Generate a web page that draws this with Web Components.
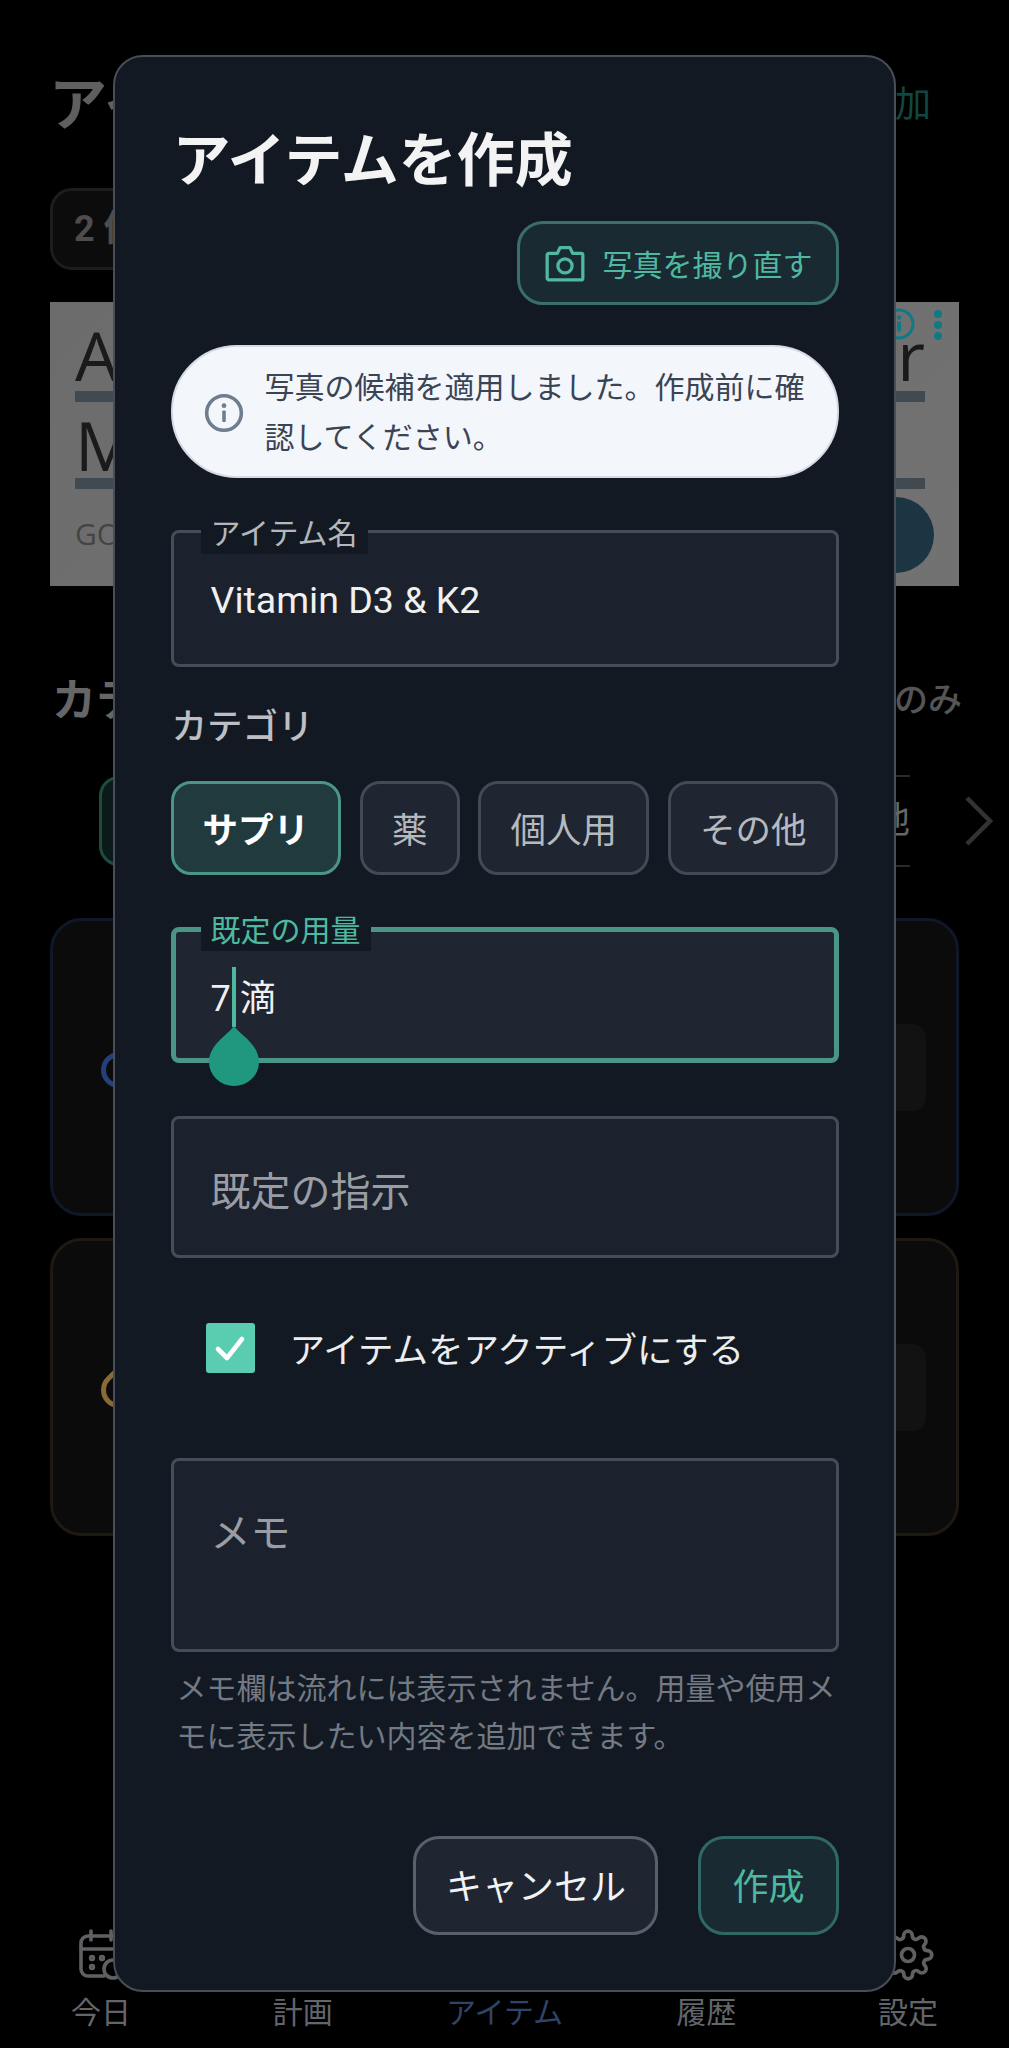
<!DOCTYPE html>
<html lang="ja">
<head>
<meta charset="utf-8">
<title>アイテムを作成</title>
<style>
html,body{margin:0;padding:0;background:#000;}
body{font-family:Roboto,"Noto Sans CJK JP",sans-serif;}
</style>
</head>
<body>
<app-shell>
  <bg-screen></bg-screen>
  <create-dialog></create-dialog>
</app-shell>
<script>
function def(name, css, html){
  customElements.define(name, class extends HTMLElement{
    connectedCallback(){
      if(this.shadowRoot) return;
      const r=this.attachShadow({mode:'open'});
      const h=typeof html==='function'?html(this):html;
      r.innerHTML='<style>'+css+'</style>'+h;
    }
  });
}
def('app-shell',`:host{display:block;position:relative;width:1009px;height:2048px;overflow:hidden;background:#000;}`,`<slot></slot>`);

def('ad-banner',`
:host{display:block;position:relative;height:284px;margin:0 50px 0 50px;background:linear-gradient(135deg,#6c6c6c,#727272);color:#1a1a1a;font-family:"Open Sans",sans-serif;overflow:hidden;}
.pad{padding:17px 34px 0 25px;}
.line{display:flex;justify-content:space-between;font-size:68px;line-height:72px;height:72px;}
.line.m{margin-top:9px;height:67px;line-height:67px;}
.bar{height:11px;background:#414a50;}
.go{font-size:30px;line-height:40px;color:#444;margin-top:25px;}
.cta{position:absolute;left:808px;top:195px;width:76px;height:76px;border-radius:50%;background:#1c3542;}
.i{position:absolute;left:833px;top:6px;width:32px;height:32px;}
.d{position:absolute;left:884px;top:8px;width:8px;height:30px;}
`,`<div class="pad">
<div class="line"><span>A</span><span>r</span></div><div class="bar"></div>
<div class="line m"><span>M</span></div><div class="bar"></div>
<div class="go">GO</div></div>
<div class="cta"></div>
<svg class="i" viewBox="0 0 32 32" fill="none"><circle cx="16" cy="16" r="14" stroke="#0f7a86" stroke-width="3"/><circle cx="16" cy="9.5" r="2.2" fill="#0f7a86"/><rect x="14" y="13.5" width="4" height="10" fill="#0f7a86"/></svg>
<svg class="d" viewBox="0 0 8 30"><circle cx="4" cy="4" r="4" fill="#0f7a86"/><circle cx="4" cy="15" r="4" fill="#0f7a86"/><circle cx="4" cy="26" r="4" fill="#0f7a86"/></svg>`);

def('bg-card',`
:host{display:flex;align-items:center;box-sizing:border-box;height:298px;margin:0 50px;border:3px solid var(--b);border-radius:32px;background:#0b0b0b;padding:0 30px 0 48px;justify-content:space-between;}
.ic{width:36px;height:36px;border-radius:50%;border:5px solid var(--ic);box-sizing:border-box;margin-top:6px;}
:host(.b) .ic{border-radius:0 50% 50% 50%;transform:rotate(45deg);}
.bx{width:60px;height:87px;border-radius:14px;background:#121212;}
`,`<div class="ic"></div><div class="bx"></div>`);

def('bg-screen',`
:host{display:flex;flex-direction:column;height:2048px;box-sizing:border-box;font-family:Roboto,"Noto Sans CJK JP",sans-serif;}
.hd{display:flex;justify-content:space-between;align-items:center;padding:70px 78px 0 49px;height:70px;}
.hd b{font-size:58px;color:#5f5f5f;line-height:70px;}
.hd span{font-size:36px;color:#10483f;line-height:62px;}
.st{box-sizing:border-box;margin:48px 0 0 50px;width:300px;height:82px;border:3px solid #1d1d1d;border-radius:22px;background:#0c0c0c;color:#4d4d4d;font-weight:700;font-size:36px;line-height:76px;padding-left:21px;}
ad-banner{margin-top:32px;}
.sec{display:flex;justify-content:space-between;align-items:center;padding:0 47px 0 52px;height:60px;margin-top:81px;}
.sec b{font-size:44px;color:#666;}
.sec span{font-size:34px;color:#555;font-weight:500;}
.chips{display:flex;align-items:center;height:92px;margin-top:48px;padding:0 16px 0 99px;}
.g{box-sizing:border-box;width:140px;height:90px;border:3px solid #1e4a40;border-radius:20px;background:#0b1a18;}
.sp{flex:1;}
.o{box-sizing:border-box;width:120px;height:92px;border-top:2px solid #2a2a2a;border-bottom:2px solid #2a2a2a;color:#666;font-size:36px;line-height:88px;text-align:right;margin-right:55px;}
svg.c{width:28px;height:50px;}
.cards{display:flex;flex-direction:column;gap:22px;margin-top:51px;}
bg-card.a{--b:#0f1828;--ic:#24407a;}
bg-card.b{--b:#1e1a12;--ic:#8a6a34;}
nav{margin-top:auto;display:grid;grid-template-columns:repeat(5,1fr);text-align:center;padding-bottom:16px;color:#62666c;font-size:30px;line-height:38px;}
nav div{display:flex;flex-direction:column;align-items:center;}
nav svg{width:52px;height:52px;margin-bottom:13px;}
.act{color:#2f4468;}
`,`
<div class="hd"><b>アイテム</b><span>追加</span></div>
<div class="st">2 件</div>
<ad-banner></ad-banner>
<div class="sec"><b>カテゴリ</b><span>アクティブのみ</span></div>
<div class="chips"><div class="g"></div><div class="sp"></div><div class="o">その他</div>
<svg class="c" viewBox="0 0 28 50" fill="none"><path d="M2 2l23 23L2 48" stroke="#333" stroke-width="4.5"/></svg></div>
<div class="cards"><bg-card class="a"></bg-card><bg-card class="b"></bg-card></div>
<nav>
<div><svg viewBox="0 0 52 52" fill="none" stroke="#5f6062" stroke-width="3.6" stroke-linecap="round"><path d="M46 26V14a7 7 0 0 0-7-7H13a7 7 0 0 0-7 7v26a7 7 0 0 0 7 7h16"/><path d="M6 20h40M16 2v9M36 2v9"/><circle cx="17" cy="29" r="1.4"/><circle cx="27" cy="29" r="1.4"/><circle cx="17" cy="38" r="1.4"/><circle cx="38" cy="40" r="9"/></svg>今日</div>
<div><svg viewBox="0 0 52 52"></svg>計画</div>
<div class="act"><svg viewBox="0 0 52 52"></svg>アイテム</div>
<div><svg viewBox="0 0 52 52"></svg>履歴</div>
<div><svg viewBox="0 0 24 24" fill="none" stroke="#5f6062" stroke-width="1.7" stroke-linejoin="round"><circle cx="12" cy="12" r="3"/><path d="M19.4 15a1.65 1.65 0 0 0 .33 1.82l.06.06a2 2 0 1 1-2.83 2.83l-.06-.06a1.65 1.65 0 0 0-1.82-.33 1.65 1.65 0 0 0-1 1.51V21a2 2 0 1 1-4 0v-.09A1.65 1.65 0 0 0 9 19.4a1.65 1.65 0 0 0-1.82.33l-.06.06a2 2 0 1 1-2.83-2.83l.06-.06A1.65 1.65 0 0 0 4.68 15a1.65 1.65 0 0 0-1.51-1H3a2 2 0 1 1 0-4h.09A1.65 1.65 0 0 0 4.6 9a1.65 1.65 0 0 0-.33-1.82l-.06-.06a2 2 0 1 1 2.83-2.83l.06.06A1.65 1.65 0 0 0 9 4.68a1.65 1.65 0 0 0 1-1.51V3a2 2 0 1 1 4 0v.09a1.65 1.65 0 0 0 1 1.51 1.65 1.65 0 0 0 1.82-.33l.06-.06a2 2 0 1 1 2.83 2.83l-.06.06A1.65 1.65 0 0 0 19.4 9a1.65 1.65 0 0 0 1.51 1H21a2 2 0 1 1 0 4h-.09a1.65 1.65 0 0 0-1.51 1z"/></svg>設定</div>
</nav>`);

def('text-field',`
:host{display:flex;position:relative;box-sizing:border-box;height:var(--h,137px);border:3px solid #474d58;border-radius:8px;background:#1b222d;color:#f0f0f0;padding:var(--pt,2px) 0 0 37px;align-items:center;font-size:37.5px;}
:host([focused]){border:5px solid #4a9586;background:#1f2632;padding-left:35px;padding-top:0;font-size:36px;}
:host([ph]){color:#9a9da3;font-size:40px;}
:host([top]){align-items:flex-start;padding-top:40px;}
.lb{position:absolute;left:27px;top:-15px;height:36px;box-sizing:border-box;padding:0 10px 4px;line-height:32px;font-size:30px;background:#121923;color:#b4b7bc;white-space:nowrap;}
:host([focused]) .lb{left:25px;top:-17px;color:#4fb9a0;}
`,(el)=>{
  const l=el.getAttribute('label');
  return (l?'<div class="lb">'+l+'</div>':'')+'<span><slot></slot></span>';
});

def('sel-chip',`
:host{display:block;box-sizing:border-box;height:94px;padding:0 29px;border:3px solid #434955;border-radius:20px;background:#1f2632;color:#b6b9be;font-size:35.5px;line-height:94px;white-space:nowrap;}
:host([on]){background:#213a3e;border-color:#4a9586;color:#fff;font-weight:700;}
`,`<slot></slot>`);

def('act-btn',`
:host{display:block;box-sizing:border-box;height:99px;padding:0 29.5px;border:3px solid #5a606b;border-radius:26px;background:#1f2632;color:#f2f2f2;font-size:36px;line-height:98px;white-space:nowrap;}
:host([pri]){background:#1a2a32;border-color:#2f6865;color:#4fb9a0;padding:0 31px;}
`,`<slot></slot>`);

def('create-dialog',`
:host{display:block;position:absolute;left:113px;top:55px;width:783px;box-sizing:border-box;border:2.5px solid #474e59;border-radius:30px;background:#121923;padding:70px 55.5px 55px;font-family:Roboto,"Noto Sans CJK JP",sans-serif;}
h2{margin:0 0 0 2px;font-size:58px;line-height:68px;font-weight:700;color:#f3f3f3;}
.pr{display:flex;justify-content:flex-end;margin-top:26px;}
.ph{display:flex;align-items:center;gap:15px;box-sizing:border-box;height:84px;padding:0 23px 0 22px;border:3px solid #3a6f6d;border-radius:26px;background:#1a2a32;color:#4fb9a0;font-size:30px;}
.ph svg{width:46px;height:46px;display:block;}
.info{display:flex;align-items:center;box-sizing:border-box;margin-top:40px;height:133px;border:2px solid #d5dae4;border-radius:66px;background:#f3f6fa;color:#3a4454;font-size:30px;line-height:50px;padding:2px 28px 0 30px;}
.info svg{flex:none;width:42px;height:42px;margin-right:20px;}
.f1{margin-top:52px;}
.cat{margin:33px 0 0 1px;height:50px;line-height:54px;font-size:35.5px;font-weight:500;color:#bdbfc4;}
.chips{display:flex;justify-content:space-between;margin-top:31px;}
.f2{margin-top:52px;--h:136px;}
.f3{margin-top:53px;--h:142px;--pt:3px;}
.caret{position:absolute;left:56px;top:35px;width:4px;height:60px;background:#4fb9a0;}
.drop{position:absolute;left:33px;top:94px;width:50px;height:60px;}
.chk{display:flex;align-items:center;margin:64px 0 0 35px;height:51px;font-size:35.5px;color:#eceded;white-space:nowrap;}
.box{width:49px;height:50px;border-radius:3px;background:#5acdb0;margin-right:35px;display:flex;align-items:center;justify-content:center;}
.box svg{width:36px;height:36px;}
.f4{margin-top:85px;--h:194px;}
.help{margin:13px 0 0 6px;font-size:30px;line-height:48px;color:#737a83;}
.acts{display:flex;justify-content:flex-end;gap:40px;margin-top:75px;}
`,`
<h2>アイテムを作成</h2>
<div class="pr"><div class="ph"><svg viewBox="0 0 24 24" fill="none" stroke="#4fb9a0" stroke-width="1.7" stroke-linejoin="round"><path d="M3.6 7H8l1.4-3h5.2L16 7h4.4a.9.9 0 0 1 .9.9v12a.9.9 0 0 1-.9.9H3.6a.9.9 0 0 1-.9-.9v-12a.9.9 0 0 1 .9-.9z"/><circle cx="12" cy="13.5" r="3.7"/></svg><span>写真を撮り直す</span></div></div>
<div class="info"><svg viewBox="0 0 40 40" fill="none"><circle cx="20" cy="20" r="16.5" stroke="#6f7d8e" stroke-width="3.4"/><circle cx="20" cy="13" r="2.2" fill="#6f7d8e"/><rect x="18.3" y="17.5" width="3.4" height="11" rx="1" fill="#6f7d8e"/></svg><span>写真の候補を適用しました。作成前に確認してください。</span></div>
<text-field class="f1" label="アイテム名">Vitamin D3 &amp; K2</text-field>
<div class="cat">カテゴリ</div>
<div class="chips"><sel-chip on>サプリ</sel-chip><sel-chip>薬</sel-chip><sel-chip>個人用</sel-chip><sel-chip>その他</sel-chip></div>
<text-field class="f2" label="既定の用量" focused>7 滴<div class="caret"></div><svg class="drop" viewBox="0 0 50 60"><path d="M25 0C30 8 50 18 50 36a25 24 0 0 1-50 0C0 18 20 8 25 0z" fill="#209880"/></svg></text-field>
<text-field class="f3" ph>既定の指示</text-field>
<div class="chk"><div class="box"><svg viewBox="0 0 36 36" fill="none"><path d="M6 19l9 9L30 9" stroke="#fff" stroke-width="4.6" stroke-linecap="round" stroke-linejoin="round"/></svg></div>アイテムをアクティブにする</div>
<text-field class="f4" ph top>メモ</text-field>
<div class="help">メモ欄は流れには表示されません。用量や使用メモに表示したい内容を追加できます。</div>
<div class="acts"><act-btn>キャンセル</act-btn><act-btn pri>作成</act-btn></div>
`);
</script>
</body>
</html>
